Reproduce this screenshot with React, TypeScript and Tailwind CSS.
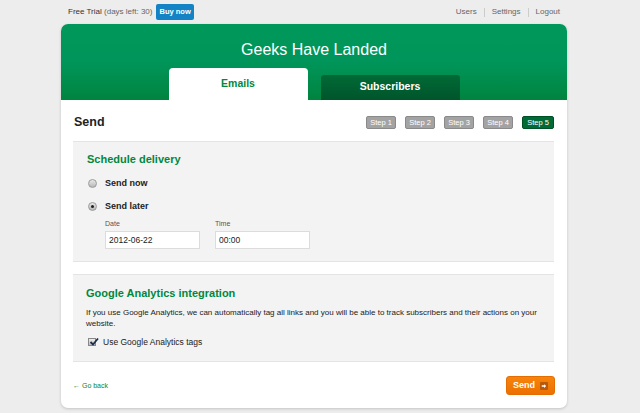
import React from 'react';

const steps = ['Step 1', 'Step 2', 'Step 3', 'Step 4', 'Step 5'];

function Radio({ checked }: { checked?: boolean }) {
  return (
    <span className="flex h-[9px] w-[9px] items-center justify-center rounded-full border border-[#9a9a9a] bg-gradient-to-b from-[#e8e8e8] to-[#b8b8b8]">
      {checked && <span className="h-[3px] w-[3px] rounded-full bg-[#222]" />}
    </span>
  );
}

export default function App() {
  return (
    <div className="min-h-[413px] bg-[#ededed] font-['Liberation_Sans',Arial,sans-serif] text-[#333]">
      {/* top bar */}
      <div className="ml-[68px] flex h-[24px] w-[492px] items-center justify-between text-[8px]">
        <div className="flex items-center gap-[4px]">
          <span className="text-[#333]">
            Free Trial <span className="text-[#666]">(days left: 30)</span>
          </span>
          <span className="rounded-[2px] bg-[#1383c5] px-[3px] py-[2px] text-[7.5px] font-bold text-white">Buy now</span>
        </div>
        <div className="flex items-center text-[#666]">
          <span className="pr-[7px]">Users</span>
          <span className="h-[9px] w-px bg-[#ccc]" />
          <span className="px-[7px]">Settings</span>
          <span className="h-[9px] w-px bg-[#ccc]" />
          <span className="pl-[7px]">Logout</span>
        </div>
      </div>

      {/* card */}
      <div className="ml-[61px] w-[506px] overflow-hidden rounded-[7px] bg-white shadow-[0_1px_3px_rgba(0,0,0,0.18)]">
        <div className="flex h-[76px] flex-col items-center bg-gradient-to-b from-[#00985a] via-[#00955a] to-[#00843f]">
          <div className="mt-[16px] text-[16px] leading-[20px] text-white">Geeks Have Landed</div>
          <div className="mt-auto flex items-end gap-[13px]">
            <div className="flex h-[32px] w-[139px] items-center justify-center rounded-t-[4px] bg-white text-[10.5px] font-bold text-[#00883f]">
              Emails
            </div>
            <div className="flex h-[25px] w-[139px] items-center justify-center rounded-t-[3px] bg-gradient-to-b from-[#006a36] to-[#00552b] pb-[1px] text-[10.5px] font-bold text-white">
              Subscribers
            </div>
          </div>
        </div>

        <div className="px-[12px] pb-[13px]">
          <div className="flex h-[41px] items-center justify-between pr-[1px] pt-[4px]">
            <span className="pl-[1px] text-[12.5px] font-bold text-[#222]">Send</span>
            <div className="flex gap-[9px]">
              {steps.map((s, i) => (
                <span
                  key={s}
                  className={
                    i === 4
                      ? 'flex h-[13px] w-[32px] items-center justify-center rounded-[2px] border border-[#005026] bg-[#006b36] text-[7.5px] text-white'
                      : 'flex h-[13px] w-[30px] items-center justify-center rounded-[2px] border border-[#8a8a8a] bg-[#a3a3a3] text-[7.5px] text-white'
                  }
                >
                  {s}
                </span>
              ))}
            </div>
          </div>

          <div className="w-[481px] border-b border-t border-[#e4e4e4] bg-[#f3f3f3] px-[14px] pb-[12px] pt-[9px]">
            <div className="text-[11px] font-bold text-[#00883f]">Schedule delivery</div>
            <div className="mt-[9px] flex items-center gap-[8px] pl-[1px]">
              <Radio />
              <span className="text-[9px] font-bold text-[#222]">Send now</span>
            </div>
            <div className="mt-[10px] flex items-center gap-[8px] pl-[1px]">
              <Radio checked />
              <span className="text-[9px] font-bold text-[#222]">Send later</span>
            </div>
            <div className="mt-[5px] flex gap-[15px] pl-[18px]">
              <div className="flex flex-col">
                <span className="text-[7px] text-[#555]">Date</span>
                <div className="mt-[2px] flex h-[18px] w-[95px] items-center border border-[#dcdcdc] bg-white px-[3px] text-[8.5px] text-[#222]">
                  2012-06-22
                </div>
              </div>
              <div className="flex flex-col">
                <span className="text-[7px] text-[#555]">Time</span>
                <div className="mt-[2px] flex h-[18px] w-[95px] items-center border border-[#dcdcdc] bg-white px-[3px] text-[8.5px] text-[#222]">
                  00:00
                </div>
              </div>
            </div>
          </div>

          <div className="mt-[12px] w-[481px] border-b border-t border-[#e4e4e4] bg-[#f3f3f3] px-[13px] pb-[13px] pt-[10px]">
            <div className="text-[11px] font-bold text-[#00883f]">Google Analytics integration</div>
            <p className="mt-[5px] text-[8px] leading-[11px] text-[#222]">
              If you use Google Analytics, we can automatically tag all links and you will be able to track subscribers and their actions on
              your website.
            </p>
            <div className="mt-[7px] flex items-center gap-[7px] pl-[2px]">
              <span className="relative flex h-[8px] w-[8px] items-center justify-center border border-[#888] bg-gradient-to-b from-[#eee] to-[#bbb]">
                <svg viewBox="0 0 10 10" className="absolute -top-[2px] left-[0px] h-[10px] w-[10px]">
                  <path d="M1.5 5 L4 7.5 L9 1.5" fill="none" stroke="#1d2d50" strokeWidth="1.8" />
                </svg>
              </span>
              <span className="text-[8.5px] text-[#222]">Use Google Analytics tags</span>
            </div>
          </div>

          <div className="mt-[14px] flex items-center justify-between">
            <span className="text-[7px] text-[#00883f]">&larr; Go back</span>
            <span className="flex h-[19px] w-[49px] items-center justify-center gap-[5px] rounded-[3px] border border-[#e36d00] bg-gradient-to-b from-[#f7830c] to-[#ec7000] text-[9px] font-bold text-white">
              Send
              <span className="flex h-[8px] w-[8px] items-center justify-center rounded-[1px] bg-[#b85a0a]">
                <svg viewBox="0 0 8 8" className="h-[6px] w-[6px]">
                  <path d="M1 3 H4 V1.5 L7 4 L4 6.5 V5 H1 Z" fill="#fff" />
                </svg>
              </span>
            </span>
          </div>
        </div>
      </div>
    </div>
  );
}
